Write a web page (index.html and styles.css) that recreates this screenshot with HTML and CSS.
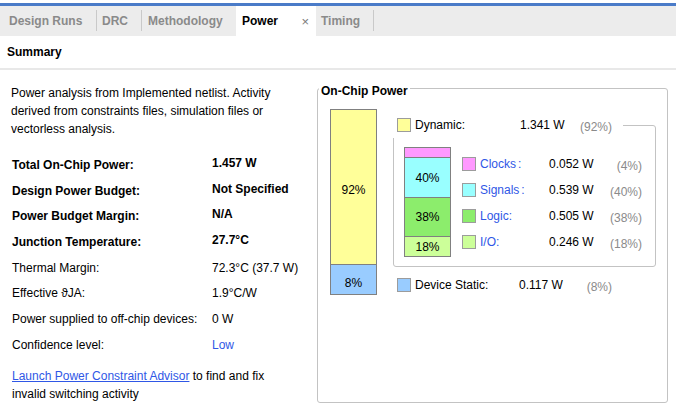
FILE: index.html
```html
<!DOCTYPE html>
<html lang="en">
<head>
<meta charset="utf-8">
<title>Power</title>
<link rel="stylesheet" href="styles.css">
</head>
<body>
<div class="accent"></div>
<nav class="tabs">
  <div class="tab first">Design Runs</div><span class="sep"></span>
  <div class="tab drc">DRC</div><span class="sep"></span>
  <div class="tab meth">Methodology</div>
  <div class="tab active"><span>Power</span><span class="close">×</span></div>
  <div class="tab timing">Timing</div><span class="sep"></span>
</nav>
<div class="section-title">Summary</div>
<main class="content">
  <section class="summary">
    <p class="intro">Power analysis from Implemented netlist. Activity derived from constraints files, simulation files or vectorless analysis.</p>
    <dl class="stats">
      <div class="row bold"><dt>Total On-Chip Power:</dt><dd>1.457 W</dd></div>
      <div class="row bold"><dt>Design Power Budget:</dt><dd>Not Specified</dd></div>
      <div class="row bold"><dt>Power Budget Margin:</dt><dd>N/A</dd></div>
      <div class="row bold"><dt>Junction Temperature:</dt><dd>27.7°C</dd></div>
      <div class="row"><dt>Thermal Margin:</dt><dd>72.3°C (37.7 W)</dd></div>
      <div class="row"><dt>Effective ϑJA:</dt><dd>1.9°C/W</dd></div>
      <div class="row"><dt>Power supplied to off-chip devices:</dt><dd>0 W</dd></div>
      <div class="row"><dt>Confidence level:</dt><dd><a class="link" href="#">Low</a></dd></div>
    </dl>
    <p class="advisor"><a class="link ul" href="#">Launch Power Constraint Advisor</a> to find and fix invalid switching activity</p>
  </section>

  <section class="panel">
    <h2 class="panel-title">On-Chip Power</h2>
    <div class="panel-body">
      <div class="bar big">
        <div class="seg yellow" style="height:154px">92%</div>
        <div class="seg blue" style="height:29px">8%</div>
      </div>
      <div class="breakdown">
        <div class="item dyn-row">
          <span class="swatch yellow"></span>
          <span class="lbl">Dynamic:</span>
          <span class="val">1.341 W</span>
          <span class="pct">(92%)</span>
        </div>
        <div class="dyn-box">
          <div class="bar small">
            <div class="seg pink" style="height:9px"></div>
            <div class="seg cyan" style="height:39px">40%</div>
            <div class="seg green" style="height:38px">38%</div>
            <div class="seg lime" style="height:19px">18%</div>
          </div>
          <ul class="sub-list">
            <li class="item sub"><span class="swatch pink"></span><span class="lbl">Clocks<span class="gap">:</span></span><span class="val">0.052 W</span><span class="pct">(4%)</span></li>
            <li class="item sub"><span class="swatch cyan"></span><span class="lbl">Signals<span class="gap">:</span></span><span class="val">0.539 W</span><span class="pct">(40%)</span></li>
            <li class="item sub"><span class="swatch green"></span><span class="lbl">Logic:</span><span class="val">0.505 W</span><span class="pct">(38%)</span></li>
            <li class="item sub"><span class="swatch lime"></span><span class="lbl">I/O:</span><span class="val">0.246 W</span><span class="pct">(18%)</span></li>
          </ul>
        </div>
        <div class="item static-row">
          <span class="swatch blue"></span>
          <span class="lbl">Device Static:</span>
          <span class="val">0.117 W</span>
          <span class="pct">(8%)</span>
        </div>
      </div>
    </div>
  </section>
</main>
</body>
</html>
```

FILE: styles.css
```css
* { box-sizing: border-box; }

html, body {
  margin: 0;
  padding: 0;
  background: #fff;
}

body {
  width: 676px;
  height: 411px;
  overflow: hidden;
  font-family: "Liberation Sans", Arial, sans-serif;
  font-size: 12px;
  color: #000;
}

.accent {
  margin-top: 3px;
  height: 3px;
  background: #4a7bc8;
}

/* tabs */
.tabs {
  display: flex;
  height: 30px;
  background: #ececec;
}

.tab {
  flex: none;
  display: flex;
  align-items: center;
  font-weight: bold;
  color: #8a8a8a;
  white-space: nowrap;
  overflow: hidden;
}

.tab.first { width: 96px; padding-left: 9px; }
.tab.drc { width: 44px; padding-left: 5px; }
.tab.meth { width: 94px; padding-left: 6px; }
.tab.timing { width: 57px; padding-left: 5px; }

.tab.active {
  width: 80px;
  background: #fff;
  color: #000;
  padding-left: 6px;
  justify-content: space-between;
  padding-right: 7px;
}

.close {
  font-weight: normal;
  color: #7a7a7a;
  font-size: 13px;
}

.sep {
  flex: none;
  width: 1px;
  background: #c9c9c9;
  margin: 4px 0 5px;
}

.section-title {
  height: 34px;
  display: flex;
  align-items: center;
  padding-left: 7px;
  font-weight: bold;
  border-bottom: 2px solid #e8e8e8;
}

/* content */
.content {
  display: flex;
  align-items: flex-start;
}

.summary {
  flex: none;
  width: 317px;
  padding-left: 11px;
  padding-right: 16px;
}

.intro {
  margin: 14px 0 0;
  line-height: 18px;
}

.stats {
  margin: 14px 0 0;
}

.row {
  display: flex;
  align-items: center;
  height: 25.7px;
}

.row dt {
  width: 201px;
  padding-left: 1px;
  white-space: nowrap;
}

.row dd {
  margin: 0;
  white-space: nowrap;
}

.row.bold { font-weight: bold; }
.row.bold dd { padding-bottom: 4px; }

.advisor {
  margin: 9px 0 0;
  padding-left: 1px;
  line-height: 18px;
}

.link {
  color: #2f57e6;
  text-decoration: none;
}

.link.ul { text-decoration: underline; }

/* panel */
.panel {
  flex: none;
  width: 351px;
  height: 315px;
  margin-top: 18px;
  border: 1px solid #c3c3c3;
  border-radius: 3px;
}

.panel-title {
  margin: -5px 0 0 1px;
  padding: 0 2px;
  width: max-content;
  background: #fff;
  font-size: 12px;
  font-weight: bold;
  line-height: 14px;
}

.panel-body {
  display: flex;
  align-items: flex-start;
  padding-left: 12px;
}

.bar {
  flex: none;
  width: 47px;
  border: 1px solid #808080;
  display: flex;
  flex-direction: column;
}

.bar.big { margin-top: 11px; }

.seg {
  box-sizing: content-box;
  display: flex;
  align-items: center;
  justify-content: center;
  line-height: 14px;
}

.seg + .seg { border-top: 1px solid #808080; }

.bar.big .seg.yellow { box-sizing: border-box; padding-top: 6px; }
.bar.big .seg.blue { box-sizing: content-box; height: 23px !important; padding-top: 6px; }

.yellow { background: #ffff99; }
.blue { background: #99ccff; }
.pink { background: #ff99ff; }
.cyan { background: #99ffff; }
.green { background: #8ced6c; }
.lime { background: #ccff99; }

.breakdown {
  flex: none;
  margin: 14px 0 0 13px;
  display: flex;
  flex-direction: column;
}

.item {
  display: flex;
  align-items: center;
  height: 26px;
  white-space: nowrap;
}

.swatch {
  flex: none;
  width: 14px;
  height: 14px;
  border: 1px solid #9c9c9c;
}

.lbl { margin-left: 4px; }
.pct {
  color: #8a8a8a;
  text-align: right;
  padding-top: 3px;
}

.dyn-row {
  position: relative;
  z-index: 1;
  width: 233px;
  background: #fff;
}

.dyn-row .swatch, .static-row .swatch { margin-left: 7px; }
.dyn-row .lbl { width: 105px; }
.dyn-row .val { width: 60px; }
.dyn-row .pct { width: 32px; }

.static-row { margin-top: 5px; }
.static-row .lbl { width: 104px; }
.static-row .val { width: 61px; }
.static-row .pct { width: 32px; }

.dyn-box {
  margin: -13px 0 0 3px;
  width: 263px;
  height: 142px;
  border: 1px solid #c3c3c3;
  border-radius: 3px;
  display: flex;
  align-items: flex-start;
  padding: 21px 0 0 10px;
}

.sub-list {
  list-style: none;
  margin: 4px 0 0 11px;
  padding: 0;
}

.sub .lbl { width: 69px; color: #2f57e6; }
.sub .val { width: 60px; }
.sub .pct { width: 33px; }

.gap { margin-left: 2px; }
```
